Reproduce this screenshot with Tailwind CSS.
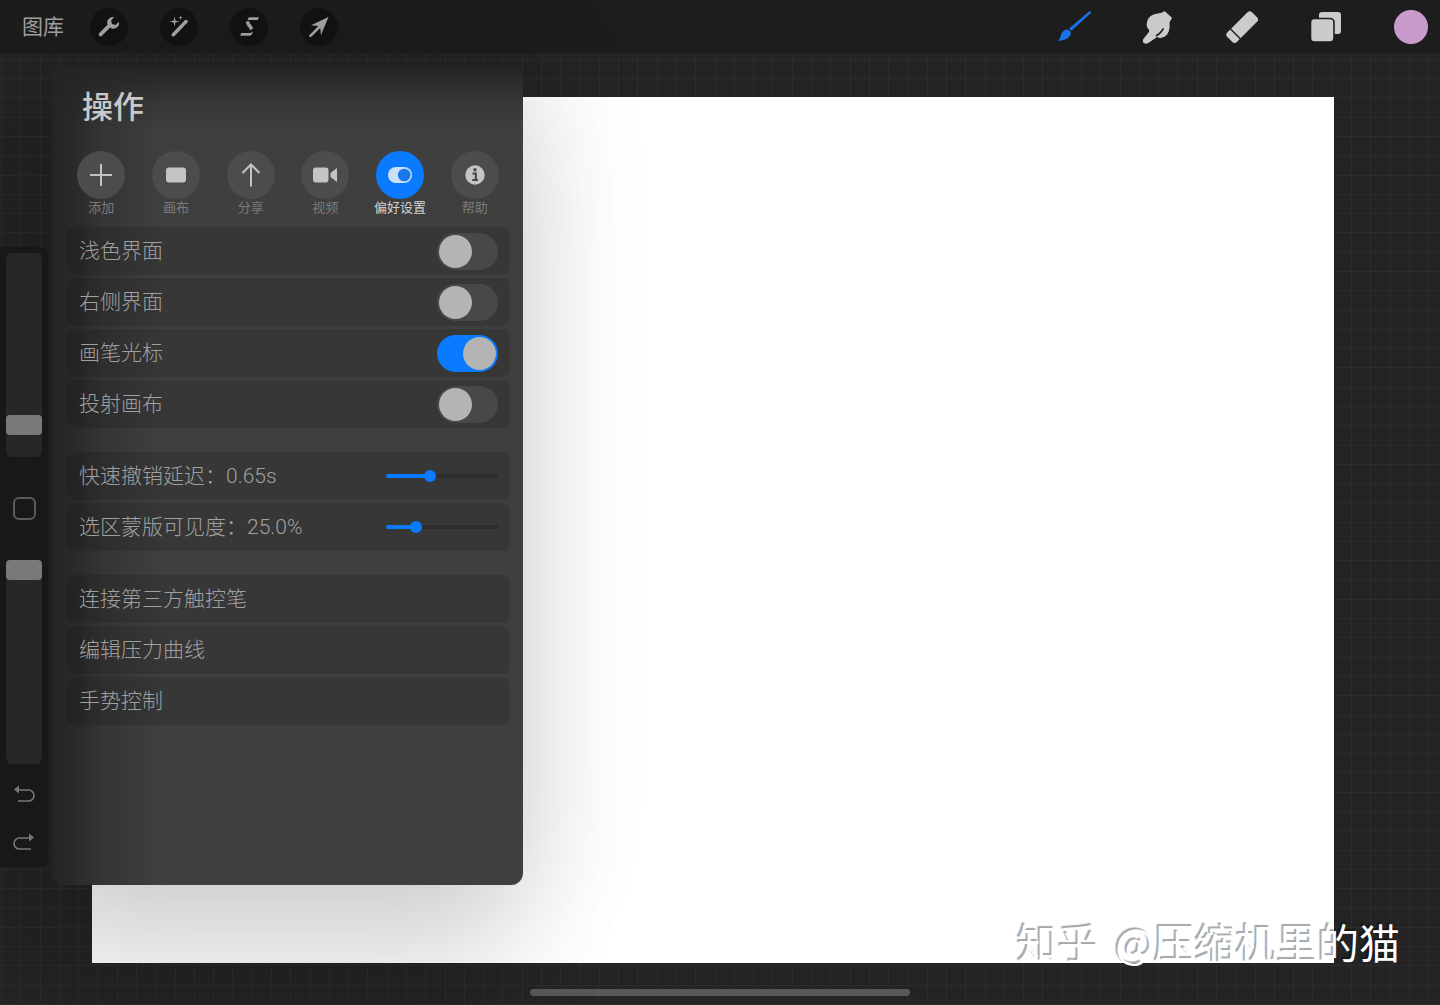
<!DOCTYPE html>
<html lang="zh-CN">
<head>
<meta charset="utf-8">
<meta name="viewport" content="width=device-width, initial-scale=1">
<title>操作 · 偏好设置</title>
<script src="https://cdn.jsdelivr.net/npm/@tailwindcss/browser@4"></script>
</head>
<body class="bg-[#242424]">
<div class="relative isolate flex min-h-screen flex-col overflow-hidden bg-[#242424] font-['Roboto','Noto_Sans_CJK_SC',sans-serif] text-[#9a9a9a]">

  <!-- workspace grid -->
  <svg class="absolute inset-0 -z-10 size-full" aria-hidden="true">
    <defs>
      <pattern id="grid" x="1" y="1" width="135" height="135" patternUnits="userSpaceOnUse">
        <path d="M0 .5h135M0 19.5h135M0 39.5h135M0 58.5h135M0 77.5h135M0 96.5h135M0 116.5h135M.5 0v135M19.5 0v135M39.5 0v135M58.5 0v135M77.5 0v135M96.5 0v135M116.5 0v135" stroke="#2c2c2c"/>
      </pattern>
    </defs>
    <rect width="100%" height="100%" fill="url(#grid)"/>
  </svg>

  <header class="flex h-[53px] items-center justify-between bg-[#1d1d1d] pr-3 pl-[22px]">
    <nav class="flex items-center gap-8" aria-label="工具">
      <a href="#" class="-mr-1.5 text-[21px] leading-6 text-[#a2a2a2]">图库</a>
      <button class="grid size-[38px] place-items-center rounded-full bg-[#131313] text-[#a6a6a6]" aria-label="操作">
        <svg class="size-6" viewBox="0 0 24 24"><path d="M3.6 19.4l8-8" stroke="currentColor" stroke-width="3.8" stroke-linecap="round"/><path d="M17.2 2.1a5.700 5.700 0 0 0-6.600 7.600l3.700 3.700a5.700 5.700 0 0 0 7.600-6.700l-3.400 3.200-3.500-.9-.9-3.500z" fill="currentColor"/></svg>
      </button>
      <button class="grid size-[38px] place-items-center rounded-full bg-[#131313] text-[#a6a6a6]" aria-label="调整">
        <svg class="size-6" viewBox="0 0 24 24" fill="currentColor"><path d="M6.300 19.700L15.200 10.400" stroke="currentColor" stroke-width="3.600" stroke-linecap="round"/><path d="M16.800 8.700L19 6.600" stroke="currentColor" stroke-width="3.600" stroke-linecap="round"/><path d="M7.500 1.500l.9 4.200 4.200.9-4.200.9-.9 4.200-.9-4.200-4.200-.9 4.200-.9zM13.500.5l.5 1.700 1.700.5-1.700.5-.5 1.700-.5-1.700-1.700-.5 1.700-.5z"/></svg>
      </button>
      <button class="grid size-[38px] place-items-center rounded-full bg-[#131313] text-[#a6a6a6]" aria-label="选取">
        <svg class="size-6" viewBox="0 0 24 24" fill="currentColor"><path d="M12.200 2.200h9.600l-1 2.700H10.500q.6-2.200 1.700-2.700zM8.800 6.800l3.300-.9q.2 2 1.700 3.600 1.900 2 2.200 4.200l-3 1.600q-.5-2.200-2.200-3.900-2-2-2-4.600zM4.200 18h9.300q.8-.2 1.300-1.300l.8.200q-.5 3.800-3.400 3.800H3.200z"/></svg>
      </button>
      <button class="grid size-[38px] place-items-center rounded-full bg-[#131313] text-[#a6a6a6]" aria-label="变换">
        <svg class="size-6" viewBox="0 0 24 24" fill="currentColor"><path d="M21.500 2L4 10.200l7.400.8-8.900 8.900a1.300 1.300 0 0 0 1.900 1.900l8.900-8.900.6 7.300z"/></svg>
      </button>
    </nav>
    <div class="flex items-center gap-12" role="toolbar" aria-label="画笔工具">
      <button class="grid size-9 place-items-center text-[#1773e8]" aria-label="绘图">
        <svg class="size-9" viewBox="0 0 36 36" fill="currentColor"><path d="M34.500 2.500c.8.500.4 1.300-.2 1.900L15.500 21.800l-2.400-2.300L31.300 4c1-.9 2.300-2 3.200-1.500zM12.200 20.600l2.700 2.500c.1 4.500-3.700 8.300-13.400 8.900 2.500-1.500 2.500-3.300 3.500-6.300 1.200-3.600 3.800-5.600 7.200-5.100z"/></svg>
      </button>
      <button class="grid size-9 place-items-center text-[#cbcbcb]" aria-label="涂抹">
        <svg class="size-9" viewBox="0 0 36 36" fill="currentColor"><path d="M24.500 2l7.500 6.800c-.6 2-2 3-2.500 5.200.5 4.500-.2 8-1.900 10.800-1.700 2.600-4.600 4-7.300 4.100-1.800.1-2.700-.3-3-1.100l-1 .7-8 5.500c-3.600 2-6.800-1-4.900-4l5.100-6.500c.8-1.200 1-2 .3-3-2-1.800-2.500-4.300-1.900-6.200.3-4.700 3.700-8.600 8.500-9.400l5-.9c1.700-.4 2.900-1 4.100-2z"/><path d="M16 27c2.600-1.300 5.600-4 7.400-7.600" stroke="#1d1d1d" stroke-width="1.500" fill="none"/></svg>
      </button>
      <button class="grid size-9 place-items-center text-[#cbcbcb]" aria-label="擦除">
        <svg class="size-9" viewBox="0 0 36 36"><g transform="translate(18 18) rotate(-45)"><rect x="-17.500" y="-6.500" width="35" height="13.500" rx="3.200" fill="currentColor"/><path d="M-9.500-7v14.500" stroke="#1d1d1d" stroke-width="1.400"/></g></svg>
      </button>
      <button class="mr-0.5 grid size-9 place-items-center text-[#cbcbcb]" aria-label="图层">
        <svg class="size-9" viewBox="0 0 36 36" fill="currentColor"><rect x="11" y="3" width="22" height="22" rx="3"/><rect x="2.500" y="9.500" width="23.500" height="23.500" rx="4" stroke="#1d1d1d" stroke-width="1.600"/></svg>
      </button>
      <button class="size-[34px] rounded-full bg-[#c99bcc]" aria-label="颜色"></button>
    </div>
  </header>

  <main class="flex flex-1 pr-[106px] pb-[42px]">
    <aside class="z-20 mt-[194px] flex h-[620px] w-12 flex-col items-center self-start rounded-r-lg bg-[#181818] pt-1.5 text-[#777777]">
      <input type="range" min="0" max="100" value="12" aria-label="画笔尺寸" class="h-[204px] w-9 appearance-none rounded-md bg-[#272727] [direction:rtl] [writing-mode:vertical-lr] [&::-webkit-slider-thumb]:h-5 [&::-webkit-slider-thumb]:w-9 [&::-webkit-slider-thumb]:appearance-none [&::-webkit-slider-thumb]:rounded [&::-webkit-slider-thumb]:bg-[#797979]">
      <button class="my-10 size-[23px] rounded-md border-2 border-[#5c5c5c]" aria-label="修改"></button>
      <input type="range" min="0" max="100" value="100" aria-label="不透明度" class="h-[204px] w-9 appearance-none rounded-md bg-[#272727] [direction:rtl] [writing-mode:vertical-lr] [&::-webkit-slider-thumb]:h-5 [&::-webkit-slider-thumb]:w-9 [&::-webkit-slider-thumb]:appearance-none [&::-webkit-slider-thumb]:rounded [&::-webkit-slider-thumb]:bg-[#797979]">
      <button class="mt-[18px] grid size-6 place-items-center" aria-label="撤销">
        <svg class="size-6" viewBox="0 0 24 24" fill="none"><path d="M6 8h10.500a5.500 5.500 0 0 1 0 11H6" stroke="currentColor" stroke-width="1.600"/><path d="M2 7.500L7 3.500v8z" fill="currentColor"/></svg>
      </button>
      <button class="mt-6 grid size-6 place-items-center" aria-label="重做">
        <svg class="size-6" viewBox="0 0 24 24" fill="none"><path d="M18 8H7.500a5.500 5.500 0 0 0 0 11H19" stroke="currentColor" stroke-width="1.600"/><path d="M22 7.500l-5-4v8z" fill="currentColor"/></svg>
      </button>
    </aside>
    <div class="mt-11 ml-11 flex-1 bg-white" role="img" aria-label="画布"></div>
  </main>

  <!-- actions popover -->
  <section class="absolute top-[66px] left-[52px] z-10 flex h-[819px] w-[471px] flex-col rounded-xl bg-[#3f3f3f] bg-[linear-gradient(to_right,#242424_0px,#242424cc_22px,#24242466_50px,#24242400_110px),linear-gradient(to_bottom,#242424_0px,#242424b0_18px,#24242440_40px,#24242400_64px)] shadow-[-30px_80px_120px_20px_rgba(0,0,0,0.11),0_0_120px_10px_rgba(0,0,0,0.13)]" aria-labelledby="panel-title">
    <h1 id="panel-title" class="mt-6 ml-[30px] text-[31px] leading-9 font-medium text-[#c8c8c8]">操作</h1>

    <div class="mt-[25px] mr-[11px] ml-3 grid grid-cols-6 text-[13px] leading-[18px] text-[#7c7c7c]" role="tablist">
      <button role="tab" class="flex flex-col items-center">
        <span class="grid size-12 place-items-center rounded-full bg-[#4c4c4c] text-[#c4c4c4]"><svg class="size-6" viewBox="0 0 24 24" stroke="currentColor" stroke-width="2"><path d="M12 1v22M1 12h22"/></svg></span>添加</button>
      <button role="tab" class="flex flex-col items-center">
        <span class="grid size-12 place-items-center rounded-full bg-[#4c4c4c] text-[#c4c4c4]"><svg class="size-6" viewBox="0 0 24 24" fill="currentColor"><rect x="2" y="4.500" width="20" height="15" rx="3"/></svg></span>画布</button>
      <button role="tab" class="flex flex-col items-center">
        <span class="grid size-12 place-items-center rounded-full bg-[#4c4c4c] text-[#c4c4c4]"><svg class="size-6" viewBox="0 0 24 24" fill="none" stroke="currentColor" stroke-width="2"><path d="M12 23.500V2M3.500 10L12 1.500 20.500 10"/></svg></span>分享</button>
      <button role="tab" class="flex flex-col items-center">
        <span class="grid size-12 place-items-center rounded-full bg-[#4c4c4c] text-[#c4c4c4]"><svg class="size-6" viewBox="0 0 24 24" fill="currentColor"><rect y="4.500" width="15.500" height="15" rx="3"/><path d="M24 5v14l-6.500-5v-4z"/></svg></span>视频</button>
      <button role="tab" aria-selected="true" class="flex flex-col items-center text-[#d4d4d4]">
        <span class="grid size-12 place-items-center rounded-full bg-[#0a7aff] text-[#c9e0fa]"><svg class="h-4 w-6" viewBox="0 0 24 16"><rect y="0" width="24" height="16" rx="8" fill="currentColor"/><circle cx="16.200" cy="8" r="6.300" fill="#1a78e8"/></svg></span>偏好设置</button>
      <button role="tab" class="flex flex-col items-center">
        <span class="grid size-12 place-items-center rounded-full bg-[#4c4c4c] text-[#c4c4c4]"><svg class="size-6" viewBox="0 0 24 24"><circle cx="12" cy="12" r="9.700" fill="currentColor"/><circle cx="12" cy="6.800" r="1.700" fill="#444"/><path d="M9.500 10.500h3.300v6.300M9.300 17h5.600" stroke="#444" stroke-width="2" fill="none"/></svg></span>帮助</button>
    </div>

    <div class="mt-2.5 mr-[13px] ml-[15px] flex flex-col gap-6 text-[21px] leading-7 font-light text-[#a0a0a0]">
      <div class="flex flex-col gap-[3px]">
        <label class="flex h-12 items-center justify-between rounded-lg bg-black/12 px-3">浅色界面
          <input type="checkbox" role="switch" class="relative h-[37px] w-[61px] appearance-none rounded-full bg-[#484849] before:absolute before:top-0.5 before:left-0.5 before:size-[33px] before:rounded-full before:bg-[#b4b4b4] checked:bg-[#0a7aff] checked:before:left-[26px]"></label>
        <label class="flex h-12 items-center justify-between rounded-lg bg-black/12 px-3">右侧界面
          <input type="checkbox" role="switch" class="relative h-[37px] w-[61px] appearance-none rounded-full bg-[#484849] before:absolute before:top-0.5 before:left-0.5 before:size-[33px] before:rounded-full before:bg-[#b4b4b4] checked:bg-[#0a7aff] checked:before:left-[26px]"></label>
        <label class="flex h-12 items-center justify-between rounded-lg bg-black/12 px-3">画笔光标
          <input type="checkbox" role="switch" checked class="relative h-[37px] w-[61px] appearance-none rounded-full bg-[#484849] before:absolute before:top-0.5 before:left-0.5 before:size-[33px] before:rounded-full before:bg-[#b4b4b4] checked:bg-[#0a7aff] checked:before:left-[26px]"></label>
        <label class="flex h-12 items-center justify-between rounded-lg bg-black/12 px-3">投射画布
          <input type="checkbox" role="switch" class="relative h-[37px] w-[61px] appearance-none rounded-full bg-[#484849] before:absolute before:top-0.5 before:left-0.5 before:size-[33px] before:rounded-full before:bg-[#b4b4b4] checked:bg-[#0a7aff] checked:before:left-[26px]"></label>
      </div>
      <div class="flex flex-col gap-[3px]">
        <label class="flex h-12 items-center justify-between rounded-lg bg-black/12 px-3">快速撤销延迟：0.65s
          <input type="range" min="0" max="100" value="38" class="h-1 w-28 appearance-none rounded-full [&::-webkit-slider-thumb]:size-3 [&::-webkit-slider-thumb]:appearance-none [&::-webkit-slider-thumb]:rounded-full [&::-webkit-slider-thumb]:bg-[#0a7aff]" style="background:linear-gradient(to right,#0a7aff 38%,#2d2d2d 38%)"></label>
        <label class="flex h-12 items-center justify-between rounded-lg bg-black/12 px-3">选区蒙版可见度：25.0%
          <input type="range" min="0" max="100" value="24" class="h-1 w-28 appearance-none rounded-full [&::-webkit-slider-thumb]:size-3 [&::-webkit-slider-thumb]:appearance-none [&::-webkit-slider-thumb]:rounded-full [&::-webkit-slider-thumb]:bg-[#0a7aff]" style="background:linear-gradient(to right,#0a7aff 24%,#2d2d2d 24%)"></label>
      </div>
      <div class="flex flex-col gap-[3px]">
        <button class="h-12 rounded-lg bg-black/12 px-3 text-left">连接第三方触控笔</button>
        <button class="h-12 rounded-lg bg-black/12 px-3 text-left">编辑压力曲线</button>
        <button class="h-12 rounded-lg bg-black/12 px-3 text-left">手势控制</button>
      </div>
    </div>
  </section>

  <p class="absolute right-10 bottom-9 flex gap-4 font-['Noto_Sans_CJK_SC',sans-serif] text-[41px] leading-14 text-white [text-shadow:-2px_-2px_1px_rgba(0,0,0,0.35)]"><span>知乎</span><span>@压缩机里的猫</span></p>
  <div class="absolute bottom-[9px] left-1/2 h-[7px] w-[380px] -translate-x-1/2 rounded-full bg-[#585858]"></div>
</div>
</body>
</html>
